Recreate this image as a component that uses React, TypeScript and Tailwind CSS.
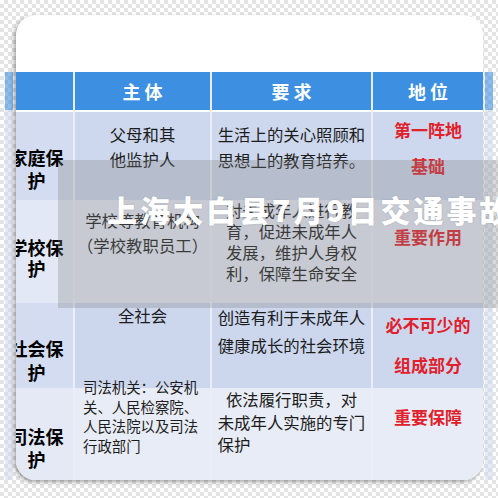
import React from "react";

const label = "flex justify-center text-center font-bold text-[18px] text-black";
const body = "text-center text-[16.4px] text-[#1c1c1c]";
const red = "text-center font-bold text-[17px] text-[#e0202a]";

function Strip() {
  return (
    <div className="flex flex-col w-[8px] mt-[57px]">
      <div className="h-[38px] bg-[#3d8fe0]/60"></div>
      <div className="h-[370px] bg-[#c9d6ee]/50"></div>
    </div>
  );
}

export default function App() {
  return (
    <div className="relative w-[498px] h-[498px] overflow-hidden bg-[conic-gradient(#e4e4e4_25%,#ffffff_0_50%,#e4e4e4_0_75%,#ffffff_0)] bg-[length:8px_8px] font-['Noto_Sans_CJK_SC',sans-serif]">
      <div className="flex items-start pl-[5px] pt-[15px]">
        <Strip />
        <div className="ml-[3px] mr-[2px] w-[467px] h-[465px] rounded-[20px] overflow-hidden bg-white shadow-[-2px_2px_4px_rgba(0,0,0,0.35)]">
          <div className="h-[57px]"></div>
          <div className="-ml-[16px] w-[483px] grid grid-cols-[73px_135px_159px_110px] gap-x-[2px] bg-[#e9eef8]">
            {/* header */}
            <div className="h-[40px] bg-[#3c8fe1] border-b-2 border-white"></div>
            <div className="h-[40px] bg-[#3c8fe1] border-b-2 border-white flex items-center justify-center text-white font-bold text-[18px] tracking-[4px] pl-[4px]">主体</div>
            <div className="h-[40px] bg-[#3c8fe1] border-b-2 border-white flex items-center justify-center text-white font-bold text-[18px] tracking-[4px] pl-[4px]">要求</div>
            <div className="h-[40px] bg-[#3c8fe1] border-b-2 border-white flex items-center justify-center text-white font-bold text-[18px] tracking-[4px] pl-[4px]">地位</div>

            {/* 家庭保护 */}
            <div className={`${label} h-[88px] bg-[#d3dcf0] pt-[34px] leading-[23px]`}>
              <div>家庭保<br />护</div>
            </div>
            <div className={`${body} h-[88px] bg-[#cdd8ee] pt-[10px] leading-[25px]`}>
              父母和其<br />他监护人
            </div>
            <div className={`${body} h-[88px] bg-[#cdd8ee] pt-[9px] leading-[26px]`}>
              生活上的关心照顾和<br />思想上的教育培养。
            </div>
            <div className={`${red} h-[88px] bg-[#cdd8ee] leading-[36px]`}>
              第一阵地<br />基础
            </div>

            {/* 学校保护 */}
            <div className={`${label} h-[103px] bg-[#e2e8f5] pt-[37px] leading-[21px]`}>
              <div>学校保<br />护</div>
            </div>
            <div className={`${body} h-[103px] bg-[#e5eaf5] pt-[8px] leading-[25px]`}>
              学校等教育机构<br />（学校教职员工）
            </div>
            <div className={`${body} h-[103px] bg-[#e5eaf5] leading-[21px]`}>
              对未成年人进行教<br />育，促进未成年人<br />发展，维护人身权<br />利，保障生命安全
            </div>
            <div className={`${red} h-[103px] bg-[#e5eaf5] pt-[25px] leading-[24px]`}>重要作用</div>

            {/* 社会保护 */}
            <div className={`${label} h-[85px] bg-[#d3dcf0] pt-[33px] leading-[24px]`}>
              <div>社会保<br />护</div>
            </div>
            <div className={`${body} h-[85px] bg-[#ccd7ee] leading-[24px]`}>全社会</div>
            <div className={`${body} h-[85px] bg-[#ccd7ee] leading-[28px]`}>
              创造有利于未成年人<br />健康成长的社会环境
            </div>
            <div className={`${red} h-[85px] bg-[#ccd7ee] pt-[2px] leading-[40px]`}>
              必不可少的<br />组成部分
            </div>

            {/* 司法保护 */}
            <div className={`${label} h-[100px] bg-[#e4e9f5] pt-[37px] leading-[23px]`}>
              <div>司法保<br />护</div>
            </div>
            <div className="h-[100px] bg-[#e8ecf6]">
              <div className="-mt-[11px] pl-[8px] text-[14.4px] leading-[19.5px] text-[#1c1c1c]">
                司法机关：公安机<br />关、人民检察院、<br />人民法院以及司法<br />行政部门
              </div>
            </div>
            <div className={`${body} h-[100px] bg-[#e8ecf6] leading-[22.5px]`}>
              依法履行职责，对<br />未成年人实施的专门<br />
              <span className="inline-block w-[148px] text-left">保护</span>
            </div>
            <div className={`${red} h-[100px] bg-[#e8ecf6] pt-[17px] leading-[24px]`}>重要保障</div>
          </div>
        </div>
        <Strip />
      </div>

      <div className="absolute left-[58px] top-[160px] right-0 h-[148px] bg-[#808080]/30 flex items-start pt-[31px] pl-[49px] whitespace-nowrap overflow-hidden">
        <span className="text-white font-black text-[30px] leading-[36px] tracking-[3px] [text-shadow:0_0_2px_rgba(0,0,0,0.15)]">
          上海太白县7月9日交通事故
        </span>
      </div>
    </div>
  );
}
